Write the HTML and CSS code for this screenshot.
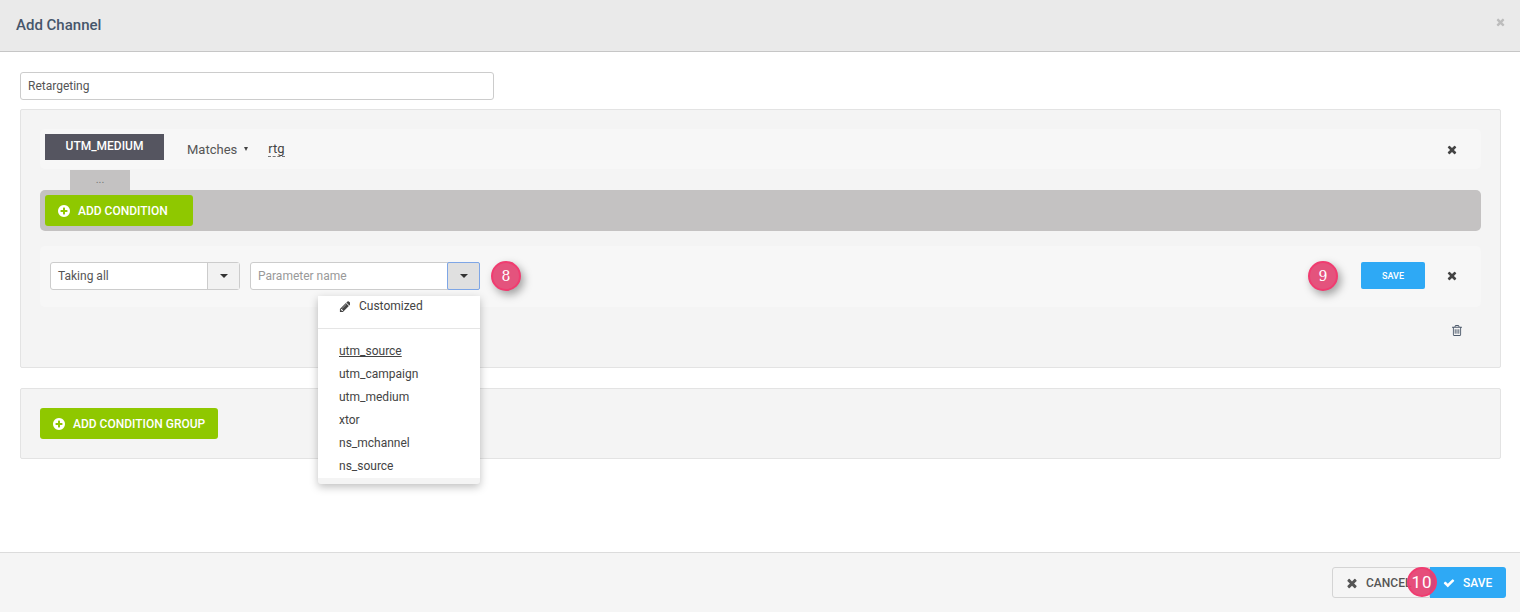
FILE: index.html
```html
<!DOCTYPE html>
<html lang="en">
<head>
    <meta charset="UTF-8">
    <meta name="viewport" content="width=device-width, initial-scale=1.0">
    <title>Add Channel</title>
    <link rel="stylesheet" href="styles.css">
</head>
<body>
    <svg class="sprite" xmlns="http://www.w3.org/2000/svg">
        <symbol id="i-times" viewBox="0 0 1408 1792"><path d="M1298 1322q0 40-28 68l-136 136q-28 28-68 28t-68-28l-294-294-294 294q-28 28-68 28t-68-28l-136-136q-28-28-28-68t28-68l294-294-294-294q-28-28-28-68t28-68l136-136q28-28 68-28t68 28l294 294 294-294q28-28 68-28t68 28l136 136q28 28 28 68t-28 68l-294 294 294 294q28 28 28 68z"/></symbol>
        <symbol id="i-check" viewBox="0 0 1792 1792"><path d="M1671 566q0 40-28 68l-724 724-136 136q-28 28-68 28t-68-28l-136-136-362-362q-28-28-28-68t28-68l136-136q28-28 68-28t68 28l294 295 656-657q28-28 68-28t68 28l136 136q28 28 28 68z"/></symbol>
        <symbol id="i-plus" viewBox="0 0 1536 1792"><path d="M1216 960v-128q0-26-19-45t-45-19h-256v-256q0-26-19-45t-45-19h-128q-26 0-45 19t-19 45v256h-256q-26 0-45 19t-19 45v128q0 26 19 45t45 19h256v256q0 26 19 45t45 19h128q26 0 45-19t19-45v-256h256q26 0 45-19t19-45zm320-64q0 209-103 385.500t-279.500 279.500-385.500 103-385.500-103-279.500-279.500-103-385.500 103-385.500 279.500-279.500 385.500-103 385.500 103 279.500 279.500 103 385.500z"/></symbol>
        <symbol id="i-pencil" viewBox="0 0 1536 1792"><path d="M491 1536l91-91-235-235-91 91v107h128v128h107zm523-928q0-22-22-22-10 0-17 7l-542 542q-7 7-7 17 0 22 22 22 10 0 17-7l542-542q7-7 7-17zm-54-192l416 416-832 832h-416v-416zm683 96q0 53-37 90l-166 166-416-416 166-165q36-38 90-38 53 0 91 38l235 234q37 39 37 91z"/></symbol>
        <symbol id="i-trash" viewBox="0 0 1408 1792"><path d="M512 736v576q0 14-9 23t-23 9h-64q-14 0-23-9t-9-23v-576q0-14 9-23t23-9h64q14 0 23 9t9 23zm256 0v576q0 14-9 23t-23 9h-64q-14 0-23-9t-9-23v-576q0-14 9-23t23-9h64q14 0 23 9t9 23zm256 0v576q0 14-9 23t-23 9h-64q-14 0-23-9t-9-23v-576q0-14 9-23t23-9h64q14 0 23 9t9 23zm128 724v-948h-896v948q0 22 7 40.500t14.500 27 10.500 8.500h832q3 0 10.500-8.500t14.500-27 7-40.500zm-672-1076h448l-48-117q-7-9-17-11h-317q-10 2-17 11zm928 32v64q0 14-9 23t-23 9h-96v948q0 83-47 143.500t-113 60.500h-832q-66 0-113-58.500t-47-141.500v-952h-96q-14 0-23-9t-9-23v-64q0-14 9-23t23-9h309l70-167q15-37 54-63t79-26h320q40 0 79 26t54 63l70 167h309q14 0 23 9t9 23z"/></symbol>
    </svg>

    <div class="modal">
        <div class="modal-header">
            <h1>Add Channel</h1>
            <svg class="icon close-icon"><use href="#i-times"/></svg>
        </div>

        <div class="modal-body">
            <div class="name-input">Retargeting</div>

            <div class="panel">
                <div class="condition-row">
                    <span class="tag">UTM_MEDIUM</span>
                    <span class="matches">Matches</span>
                    <span class="small-caret"></span>
                    <span class="value">rtg</span>
                    <svg class="icon remove-icon"><use href="#i-times"/></svg>
                </div>
                <div class="more-tab">...</div>
                <div class="condition-bar">
                    <button class="btn btn-green">
                        <svg class="icon"><use href="#i-plus"/></svg>
                        ADD CONDITION
                    </button>
                </div>

                <div class="edit-row">
                    <div class="combo combo-taking">
                        <div class="combo-text">Taking all</div>
                        <div class="combo-btn"><span class="caret"></span></div>
                    </div>
                    <div class="combo combo-param">
                        <div class="combo-text placeholder">Parameter name</div>
                        <div class="combo-btn active"><span class="caret"></span></div>
                    </div>
                    <span class="badge badge-8">8</span>
                    <div class="edit-actions">
                        <span class="badge badge-9">9</span>
                        <button class="btn-save-small">SAVE</button>
                        <svg class="icon remove-icon"><use href="#i-times"/></svg>
                    </div>

                    <ul class="dropdown">
                        <li class="custom-item">
                            <svg class="icon"><use href="#i-pencil"/></svg>
                            Customized
                        </li>
                        <li class="divider"></li>
                        <li class="current">utm_source</li>
                        <li>utm_campaign</li>
                        <li>utm_medium</li>
                        <li>xtor</li>
                        <li>ns_mchannel</li>
                        <li>ns_source</li>
                    </ul>
                </div>

                <div class="trash-row">
                    <svg class="icon trash-icon"><use href="#i-trash"/></svg>
                </div>
            </div>

            <div class="panel group-panel">
                <button class="btn btn-green">
                    <svg class="icon"><use href="#i-plus"/></svg>
                    ADD CONDITION GROUP
                </button>
            </div>
        </div>

        <div class="modal-footer">
            <button class="btn btn-cancel">
                <svg class="icon"><use href="#i-times"/></svg>
                CANCEL
            </button>
            <button class="btn btn-blue">
                <svg class="icon"><use href="#i-check"/></svg>
                SAVE
            </button>
            <span class="badge badge-10">10</span>
        </div>
    </div>
</body>
</html>
```

FILE: styles.css
```css
* {
    box-sizing: border-box;
}

body {
    margin: 0;
    font-family: Roboto, "Liberation Sans", sans-serif;
    font-size: 12px;
    color: #444;
    background-color: #fff;
    overflow: hidden;
}

.sprite {
    display: none;
}

.icon {
    display: inline-block;
    width: 12px;
    height: 14px;
    fill: currentColor;
    flex: none;
}

.modal {
    display: flex;
    flex-direction: column;
    height: 612px;
}

.modal-header {
    display: flex;
    align-items: center;
    justify-content: space-between;
    height: 52px;
    padding: 0 15px 2px 16px;
    background-color: #eaeaea;
    border-bottom: 1px solid #c6c6c6;
}

.modal-header h1 {
    margin: 0;
    font-size: 15px;
    font-weight: 500;
    color: #46566b;
}

.close-icon {
    width: 9px;
    height: 12px;
    margin-top: -5px;
    color: #bdbdbd;
}

.modal-body {
    flex: 1;
    padding: 20px 19px 0 20px;
}

.name-input {
    width: 474px;
    height: 28px;
    margin-bottom: 9px;
    padding: 0 7px;
    line-height: 26px;
    color: #555;
    background-color: #fff;
    border: 1px solid #ccc;
    border-radius: 3px;
}

.panel {
    height: 259px;
    padding: 19px;
    background-color: #f4f4f4;
    border: 1px solid #e3e3e3;
    border-radius: 2px;
}

.condition-row {
    display: flex;
    align-items: center;
    height: 40px;
    padding: 0 24px 0 5px;
    background-color: #f7f7f7;
    border-radius: 5px;
}

.tag {
    width: 119px;
    height: 26px;
    margin-top: -4px;
    line-height: 25px;
    text-align: center;
    font-weight: 500;
    color: #fff;
    background-color: #555560;
}

.matches {
    margin-left: 23px;
    font-size: 13px;
    color: #555;
}

.small-caret {
    width: 0;
    height: 0;
    margin-left: 7px;
    border-top: 4px solid #444;
    border-left: 2.5px solid transparent;
    border-right: 2.5px solid transparent;
}

.value {
    margin-left: 20px;
    font-size: 13px;
    line-height: 15px;
    color: #444;
    border-bottom: 1px dashed #777;
}

.remove-icon {
    width: 10px;
    height: 13px;
    margin-left: auto;
    color: #444;
}

.more-tab {
    width: 60px;
    height: 20px;
    margin: 1px 0 0 30px;
    line-height: 20px;
    text-align: center;
    font-size: 11px;
    color: #777;
    background-color: #c4c2c2;
}

.condition-bar {
    height: 41px;
    padding: 5px;
    background-color: #c4c2c2;
    border-radius: 5px;
}

.btn {
    display: inline-flex;
    align-items: center;
    gap: 8px;
    height: 31px;
    padding: 0 13px;
    font-family: inherit;
    font-size: 12px;
    font-weight: 500;
    border: none;
    border-radius: 3px;
    cursor: pointer;
}

.btn-green {
    color: #fff;
    background-color: #8fc800;
}

.condition-bar .btn-green {
    width: 148px;
}

.edit-row {
    position: relative;
    display: flex;
    align-items: center;
    height: 61px;
    margin-top: 15px;
    padding: 0 24px 2px 10px;
    background-color: #f7f7f7;
    border-radius: 5px;
}

.combo {
    display: flex;
    height: 28px;
    background-color: #fff;
    border: 1px solid #ccc;
    border-radius: 3px;
}

.combo-taking {
    width: 190px;
}

.combo-param {
    width: 230px;
    margin-left: 10px;
}

.combo-text {
    flex: 1;
    padding: 0 7px;
    line-height: 26px;
    color: #555;
}

.placeholder {
    color: #999;
}

.combo-btn {
    display: flex;
    align-items: center;
    justify-content: center;
    width: 32px;
    background-color: #f2f2f2;
    border-left: 1px solid #ccc;
}

.combo-btn.active {
    width: 33px;
    margin: -1px;
    background-color: #e0e0e0;
    border: 1px solid #7ea6e6;
    border-radius: 2px;
}

.caret {
    width: 0;
    height: 0;
    border-top: 4px solid #333;
    border-left: 4px solid transparent;
    border-right: 4px solid transparent;
}

.edit-actions {
    display: flex;
    align-items: center;
    margin-left: auto;
}

.edit-actions .remove-icon {
    margin-left: 22px;
}

.btn-save-small {
    width: 64px;
    height: 27px;
    margin-left: 23px;
    padding: 0;
    font-family: inherit;
    font-size: 9px;
    font-weight: 500;
    color: #fff;
    background-color: #2ea9f5;
    border: none;
    border-radius: 2px;
}

.badge {
    display: flex;
    align-items: center;
    justify-content: center;
    width: 30px;
    height: 30px;
    font-family: "DejaVu Serif", serif;
    font-size: 14px;
    color: #fff;
    background-color: #e4537d;
    border: 2px solid #f03c70;
    border-radius: 50%;
    box-shadow: 3px 4px 8px rgba(0, 0, 0, 0.35);
}

.badge-8 {
    margin-left: 11px;
}

.badge-10 {
    position: absolute;
    left: 1407px;
    top: 567px;
    font-family: Roboto, sans-serif;
    font-size: 17px;
    letter-spacing: 1px;
    background-color: rgba(228, 60, 110, 0.9);
    box-shadow: none;
}

.dropdown {
    position: absolute;
    left: 278px;
    top: 50px;
    width: 162px;
    margin: 0;
    padding: 0 0 6px;
    list-style: none;
    font-size: 12px;
    color: #444;
    background-color: #f4f4f4;
    border-radius: 0 0 3px 3px;
    box-shadow: 0 3px 8px rgba(0, 0, 0, 0.25);
}

.dropdown li {
    height: 23px;
    padding-left: 21px;
    line-height: 23px;
    background-color: #fff;
}

.dropdown .custom-item {
    display: flex;
    align-items: center;
    gap: 9px;
    height: 22px;
    padding-bottom: 2px;
}

.dropdown .custom-item .icon {
    width: 11px;
    height: 13px;
}

.dropdown .divider {
    height: 22px;
    padding: 0;
    background: linear-gradient(#fff 10px, #e5e5e5 10px, #e5e5e5 11px, #fff 11px);
}

.dropdown .current {
    text-decoration: underline;
}

.trash-row {
    display: flex;
    justify-content: flex-end;
    padding: 17px 19px 0 0;
}

.trash-icon {
    width: 10px;
    height: 13px;
    color: #4d5a6b;
}

.group-panel {
    height: 71px;
    margin-top: 20px;
}

.modal-footer {
    display: flex;
    justify-content: flex-end;
    height: 60px;
    padding: 14px 14px 0 0;
    background-color: #f5f5f5;
    border-top: 1px solid #dcdcdc;
}

.btn-cancel {
    width: 98px;
    color: #555;
    background-color: #f5f5f5;
    border: 1px solid #d4d4d4;
    border-radius: 3px 0 0 3px;
}

.btn-blue {
    width: 76px;
    color: #fff;
    background-color: #2ea9f5;
    border-radius: 0 3px 3px 0;
}
```
